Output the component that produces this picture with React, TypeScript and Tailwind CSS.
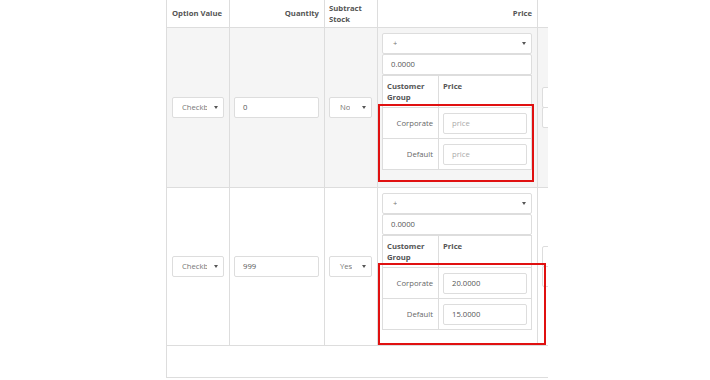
import clsx from "clsx";

const line = "border-[#dddddd]";

function Arrow() {
  return (
    <span className="block w-0 h-0 border-x-[2px] border-x-transparent border-t-[3px] border-t-[#555]" />
  );
}

function Select({
  text,
  className,
  textClass,
}: {
  text: string;
  className?: string;
  textClass?: string;
}) {
  return (
    <div
      className={clsx(
        "flex items-center h-[21px] border border-[#dddddd] rounded-[2px] bg-white pr-[5px] text-[#777]",
        className
      )}
    >
      <span className={clsx("overflow-hidden whitespace-nowrap", textClass)}>{text}</span>
      <span className="ml-auto">
        <Arrow />
      </span>
    </div>
  );
}

function Input({
  value,
  placeholder,
  className,
}: {
  value?: string;
  placeholder?: string;
  className?: string;
}) {
  return (
    <div
      className={clsx(
        "flex items-center h-[21px] border border-[#dddddd] rounded-[2px] bg-white pl-[8px]",
        value ? "text-[#555]" : "text-[#aaa]",
        className
      )}
    >
      {value ?? placeholder}
    </div>
  );
}

function PriceCell({ corporate, def }: { corporate?: string; def?: string }) {
  return (
    <div className="flex flex-col w-[150px] pt-[5px]">
      <Select text="+" className="w-[150px]" textClass="pl-[10px]" />
      <Input value="0.0000" className="w-[150px]" />
      <div className={clsx("border bg-white", line)}>
        <div className="flex h-[31px]">
          <div className="w-[55px] pl-[4px] pt-[5px] font-bold text-[#555] leading-[11px]">
            Customer
            <br />
            Group
          </div>
          <div className={clsx("flex-1 border-l pl-[4px] pt-[5px] font-bold text-[#555] leading-[11px]", line)}>
            Price
          </div>
        </div>
        <div className={clsx("flex h-[31px] border-t", line)}>
          <div className="w-[55px] flex items-center justify-end pr-[5px] text-[#666]">Corporate</div>
          <div className={clsx("flex-1 border-l flex items-center pl-[4px]", line)}>
            <Input value={corporate} placeholder="price" className="w-[84px]" />
          </div>
        </div>
        <div className={clsx("flex h-[31px] border-t", line)}>
          <div className="w-[55px] flex items-center justify-end pr-[5px] text-[#666]">Default</div>
          <div className={clsx("flex-1 border-l flex items-center pl-[4px]", line)}>
            <Input value={def} placeholder="price" className="w-[84px]" />
          </div>
        </div>
      </div>
    </div>
  );
}

function Row({
  qty,
  subtract,
  corporate,
  def,
  height,
  bg,
}: {
  qty: string;
  subtract: string;
  corporate?: string;
  def?: string;
  height: string;
  bg: string;
}) {
  return (
    <div className={clsx("flex border-b", line, height, bg)}>
      <div className={clsx("w-[63px] border-l flex items-center pl-[5px]", line)}>
        <Select text="Checkbox" className="w-[52px] pl-[9px]" textClass="w-[25px]" />
      </div>
      <div className={clsx("w-[95px] border-l flex items-center pl-[4px]", line)}>
        <Input value={qty} className="w-[85px]" />
      </div>
      <div className={clsx("w-[53px] border-l flex items-center pl-[4px]", line)}>
        <Select text={subtract} className="w-[43px]" textClass="pl-[10px]" />
      </div>
      <div className={clsx("w-[160px] border-l pl-[4px]", line)}>
        <PriceCell corporate={corporate} def={def} />
      </div>
      <div className={clsx("w-[100px] border-l flex flex-col justify-center pl-[4px]", line)}>
        <Select text="" className="w-[80px]" />
        <Input value="" className="w-[80px] -mt-px" />
      </div>
    </div>
  );
}

export default function App() {
  return (
    <div className="relative w-[710px] h-[380px] bg-white font-['Open_Sans',sans-serif] text-[7.7px] leading-[11px] text-[#666] overflow-hidden">
      <div className="ml-[166px] w-[382px] overflow-hidden">
        <div className="w-[480px]">
          <div className={clsx("flex h-[28px] border-b bg-white font-bold text-[#555]", line)}>
            <div className={clsx("w-[63px] border-l flex items-center pl-[5px]", line)}>Option Value</div>
            <div className={clsx("w-[95px] border-l flex items-center justify-end pr-[5px]", line)}>Quantity</div>
            <div className={clsx("w-[53px] border-l flex items-center pl-[4px]", line)}>
              Subtract
              <br />
              Stock
            </div>
            <div className={clsx("w-[160px] border-l flex items-center justify-end pr-[5px]", line)}>Price</div>
            <div className={clsx("w-[100px] border-l", line)} />
          </div>
          <Row qty="0" subtract="No" height="h-[160px]" bg="bg-[#f5f5f5]" />
          <Row qty="999" subtract="Yes" corporate="20.0000" def="15.0000" height="h-[158px]" bg="bg-white" />
          <div className={clsx("h-[32px] border-b border-l", line)} />
        </div>
      </div>

      <div className="absolute left-[378px] top-[104px] w-[156px] h-[78px] border-2 border-[#e01010]" />
      <div className="absolute left-[378px] top-[263px] w-[168px] h-[82px] border-2 border-[#e01010]" />
    </div>
  );
}
